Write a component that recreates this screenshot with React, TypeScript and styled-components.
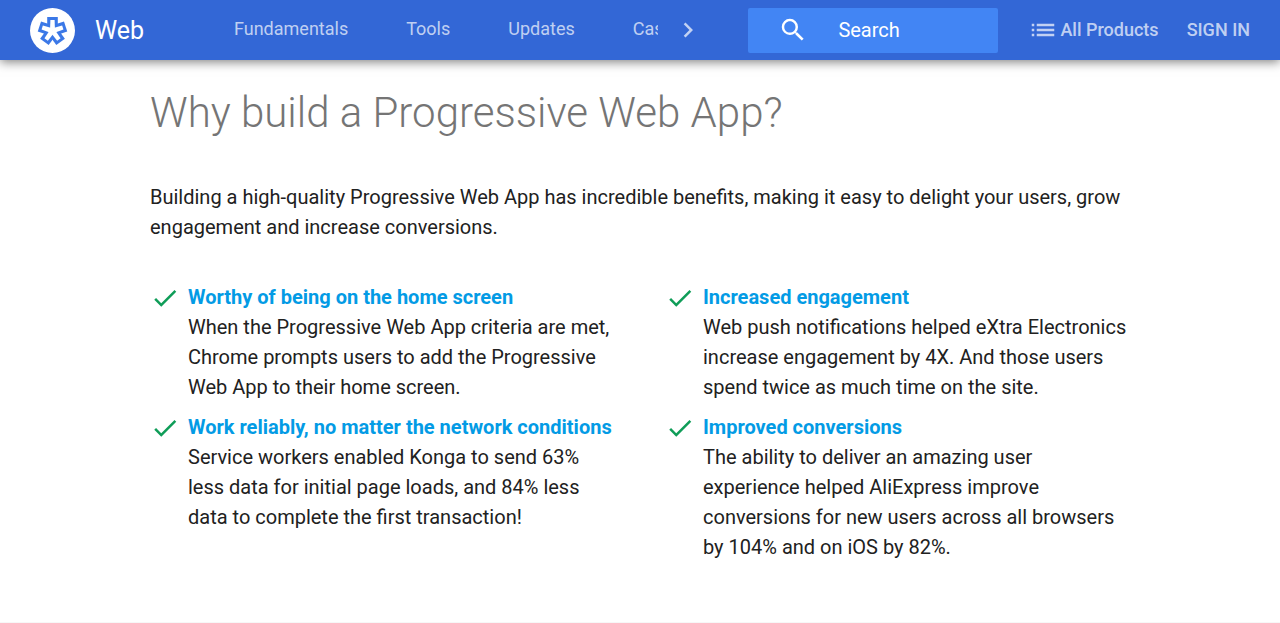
import React from "react";
import styled, { createGlobalStyle } from "styled-components";
import { MdCheck, MdChevronRight, MdList, MdSearch } from "react-icons/md";

const GlobalStyle = createGlobalStyle`
  *, *::before, *::after { box-sizing: border-box; }
  body {
    margin: 0;
    background: #fff;
    color: #212121;
    font: 400 20px/30px Roboto, "Noto Sans", sans-serif;
  }
`;

const TopBar = styled.header`
  position: sticky;
  top: 0;
  z-index: 1;
  display: flex;
  align-items: center;
  height: 60px;
  padding: 0 30px;
  background: #3367d6;
  box-shadow: 0 2px 10px rgba(0, 0, 0, 0.5);
`;

const Brand = styled.a`
  display: flex;
  align-items: center;
  gap: 20px;
  width: 174px;
  flex: none;
  color: #fff;
  font-size: 25px;
  text-decoration: none;
`;

const Wordmark = styled.span`
  padding-top: 2px;
`;

const Logo = styled.svg`
  width: 45px;
  height: 45px;
`;

const Tabs = styled.nav`
  display: flex;
  flex: 1;
  gap: 58px;
  min-width: 0;
  margin-left: 30px;
  padding-bottom: 2px;
  overflow: hidden;
  white-space: nowrap;
`;

const Tab = styled.a`
  flex: none;
  color: rgba(255, 255, 255, 0.7);
  font-size: 18px;
  text-decoration: none;
`;

const IconButton = styled.button`
  display: flex;
  flex: none;
  align-items: center;
  justify-content: center;
  width: 60px;
  height: 60px;
  margin-right: 30px;
  padding: 0;
  border: 0;
  background: none;
  color: rgba(255, 255, 255, 0.7);
`;

const SearchBox = styled.label`
  display: flex;
  flex: none;
  align-items: center;
  gap: 30px;
  width: 250px;
  height: 45px;
  padding: 0 30px;
  border-radius: 2px;
  background: #4285f4;
  color: #fff;
`;

const SearchInput = styled.input`
  flex: 1;
  min-width: 0;
  padding: 0;
  border: 0;
  outline: 0;
  background: none;
  color: #fff;
  font: inherit;
  &::placeholder { color: #fff; opacity: 1; }
`;

const Actions = styled.div`
  display: flex;
  flex: none;
  gap: 28px;
  margin-left: 30px;
`;

const Action = styled.a`
  display: flex;
  align-items: center;
  gap: 2px;
  color: rgba(255, 255, 255, 0.7);
  font-size: 18px;
  font-weight: 500;
  text-decoration: none;
`;

const Section = styled.main`
  max-width: 1040px;
  margin: 0 auto;
  padding: 28px 30px 60px;
`;

const Title = styled.h1`
  margin: 0 0 44px;
  color: #757575;
  font-size: 42px;
  font-weight: 300;
  line-height: 50px;
`;

const Intro = styled.p`
  margin: 0 0 40px;
`;

const Columns = styled.div`
  display: grid;
  grid-template-columns: 1fr 1fr;
  gap: 50px;
`;

const BenefitList = styled.ul`
  display: flex;
  flex-direction: column;
  gap: 10px;
  margin: 0;
  padding: 0;
  list-style: none;
`;

const Benefit = styled.li`
  display: flex;
  gap: 8px;
`;

const CheckIcon = styled(MdCheck)`
  flex: none;
  margin-top: 1px;
  color: #0f9d58;
`;

const BenefitLink = styled.a`
  display: block;
  color: #039be5;
  font-weight: 700;
  text-decoration: none;
`;

const BenefitText = styled.p`
  margin: 0;
`;

const Footer = styled.footer`
  height: 60px;
  background: #f7f7f7;
`;

const tabs = ["Fundamentals", "Tools", "Updates", "Case Studies"];

const columns = [
  [
    {
      title: "Worthy of being on the home screen",
      text: "When the Progressive Web App criteria are met, Chrome prompts users to add the Progressive Web App to their home screen.",
    },
    {
      title: "Work reliably, no matter the network conditions",
      text: "Service workers enabled Konga to send 63% less data for initial page loads, and 84% less data to complete the first transaction!",
    },
  ],
  [
    {
      title: "Increased engagement",
      text: "Web push notifications helped eXtra Electronics increase engagement by 4X. And those users spend twice as much time on the site.",
    },
    {
      title: "Improved conversions",
      text: "The ability to deliver an amazing user experience helped AliExpress improve conversions for new users across all browsers by 104% and on iOS by 82%.",
    },
  ],
];

const armAngles = [0, 72, 144, 216, 288];

function WebLogo() {
  return (
    <Logo viewBox="0 0 45 45" aria-hidden="true">
      <circle cx="22.5" cy="22.5" r="22.5" fill="#fff" />
      {armAngles.map((a) => (
        <path key={a} d="M17.2 23V9h10.6V23z" fill="#3b78e7" transform={`rotate(${a} 22.5 22.8)`} />
      ))}
      {armAngles.map((a) => (
        <path key={a} d="M20 22.8L20.4 12h4.2L25 22.8z" fill="#fff" transform={`rotate(${a} 22.5 22.8)`} />
      ))}
    </Logo>
  );
}

export default function App() {
  return (
    <>
      <GlobalStyle />
      <TopBar>
        <Brand href="#">
          <WebLogo />
          <Wordmark>Web</Wordmark>
        </Brand>
        <Tabs>
          {tabs.map((t) => (
            <Tab key={t} href="#">{t}</Tab>
          ))}
        </Tabs>
        <IconButton aria-label="More sections">
          <MdChevronRight size={30} />
        </IconButton>
        <SearchBox>
          <MdSearch size={30} />
          <SearchInput type="text" placeholder="Search" aria-label="Search" />
        </SearchBox>
        <Actions>
          <Action href="#">
            <MdList size={30} />
            All Products
          </Action>
          <Action href="#">SIGN IN</Action>
        </Actions>
      </TopBar>
      <Section>
        <Title>Why build a Progressive Web App?</Title>
        <Intro>
          Building a high-quality Progressive Web App has incredible benefits, making it easy to
          delight your users, grow engagement and increase conversions.
        </Intro>
        <Columns>
          {columns.map((items, i) => (
            <BenefitList key={i}>
              {items.map((b) => (
                <Benefit key={b.title}>
                  <CheckIcon size={30} />
                  <div>
                    <BenefitLink href="#">{b.title}</BenefitLink>
                    <BenefitText>{b.text}</BenefitText>
                  </div>
                </Benefit>
              ))}
            </BenefitList>
          ))}
        </Columns>
      </Section>
      <Footer />
    </>
  );
}
